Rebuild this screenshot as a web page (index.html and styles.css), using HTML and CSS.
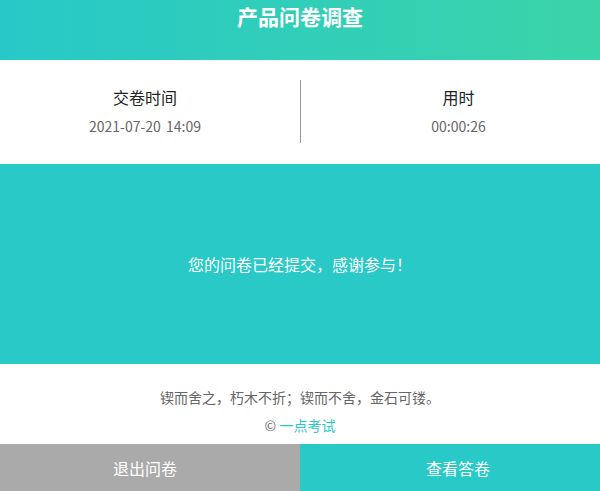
FILE: index.html
```html
<!DOCTYPE html>
<html lang="zh-CN">
<head>
<meta charset="utf-8">
<title>产品问卷调查</title>
<link rel="stylesheet" href="styles.css">
</head>
<body>
<div class="page">
  <header class="header">
    <h1 class="title">产品问卷调查</h1>
  </header>

  <section class="info">
    <div class="info-col info-col--left">
      <div class="info-label">交卷时间</div>
      <div class="info-value">2021-07-20 14:09</div>
    </div>
    <div class="info-col info-col--right">
      <div class="info-label">用时</div>
      <div class="info-value">00:00:26</div>
    </div>
  </section>

  <section class="notice">
    <p class="notice-text">您的问卷已经提交，感谢参与！</p>
  </section>

  <footer class="footer">
    <p class="quote">锲而舍之，朽木不折；锲而不舍，金石可镂。</p>
    <p class="copyright">© <a class="brand" href="#">一点考试</a></p>
  </footer>

  <nav class="actions">
    <a class="btn btn--exit" href="#">退出问卷</a>
    <a class="btn btn--view" href="#">查看答卷</a>
  </nav>
</div>
</body>
</html>
```

FILE: styles.css
```css
* {
  box-sizing: border-box;
}

html, body {
  margin: 0;
  padding: 0;
  background: #fff;
}

body {
  font-family: "Noto Sans CJK SC", "Noto Sans", sans-serif;
  color: #333;
  overflow: hidden;
}

.page {
  width: 600px;
  display: flex;
  flex-direction: column;
}

/* top bar */
.header {
  height: 60px;
  background: linear-gradient(90deg, #27c8c8 0%, #3bd4a9 100%);
  display: flex;
  justify-content: center;
}

.title {
  margin: 0;
  font-size: 21px;
  line-height: 32px;
  font-weight: 700;
  color: #fff;
}

/* submit time / duration */
.info {
  display: flex;
  padding: 20px 0 21px;
}

.info-col {
  flex: 0 0 50%;
  height: 63px;
  padding-bottom: 3px;
  display: flex;
  flex-direction: column;
  align-items: center;
  justify-content: center;
  gap: 7px;
}

.info-col--left {
  padding-right: 10px;
}

.info-col--right {
  border-left: 1px solid #999;
  padding-left: 16px;
}

.info-label {
  font-size: 16px;
  line-height: 24px;
  color: #222;
}

.info-value {
  font-size: 14px;
  line-height: 20px;
  color: #666;
  word-spacing: 2px;
}

/* success message */
.notice {
  height: 200px;
  background: #29c9c7;
  display: flex;
  align-items: center;
  justify-content: center;
}

.notice-text {
  margin: 0;
  font-size: 16px;
  line-height: 24px;
  color: #fff;
}

/* motto + copyright */
.footer {
  height: 80px;
  padding-top: 23px;
  display: flex;
  flex-direction: column;
  align-items: center;
  gap: 8px;
}

.quote,
.copyright {
  margin: 0;
  font-size: 14px;
  line-height: 20px;
  color: #666;
}

.brand {
  color: #29c9c7;
  text-decoration: none;
}

/* bottom buttons */
.actions {
  display: flex;
  height: 48px;
}

.btn {
  flex: 0 0 50%;
  display: flex;
  align-items: center;
  justify-content: center;
  font-size: 16px;
  color: #fff;
  text-decoration: none;
}

.btn--exit {
  background: #aaaaaa;
  padding-right: 10px;
}

.btn--view {
  background: #29c9c7;
  padding-left: 16px;
}
```
